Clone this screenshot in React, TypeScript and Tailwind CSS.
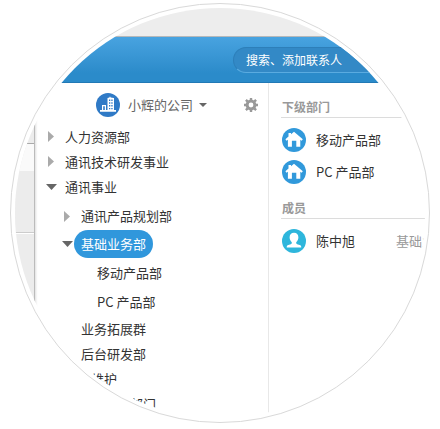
import { useState } from "react";
import type { ReactNode } from "react";

type Department = {
  name: string;
  expandable?: boolean;
  children?: Department[];
};

const departments: Department[] = [
  { name: "人力资源部", expandable: true },
  { name: "通讯技术研发事业", expandable: true },
  {
    name: "通讯事业",
    children: [
      { name: "通讯产品规划部", expandable: true },
      {
        name: "基础业务部",
        children: [{ name: "移动产品部" }, { name: "PC 产品部" }],
      },
      { name: "业务拓展群" },
      { name: "后台研发部" },
    ],
  },
  { name: "运营维护" },
  { name: "通讯支持类部门" },
];

const subDepartments = ["移动产品部", "PC 产品部"];

const indents = ["pl-2", "pl-6", "pl-10"];

function CompanyIcon() {
  return (
    <svg viewBox="0 0 24 24" className="size-6 shrink-0" aria-hidden="true">
      <circle cx="12" cy="12" r="12" fill="#2f7ac6" />
      <path
        fill="#fff"
        fillRule="evenodd"
        d="M4 17h2v-5h4v5h1.500V5l2-.5V3.800h1v.7l3.500.6V17h2v1.700H4zM7.200 13.200V17h1.600v-3.800zM13 6.500v1.500h1.300V6.500zm2.300 0v1.500h1.300V6.500zM13 9.300v1.500h1.300V9.300zm2.300 0v1.500h1.300V9.300zM13 12.100v1.500h1.300v-1.500zm2.300 0v1.500h1.300v-1.500zM13 14.900v1.400h1.300v-1.400zm2.300 0v1.400h1.300v-1.400z"
      />
    </svg>
  );
}

function HouseIcon() {
  return (
    <svg viewBox="0 0 24 24" className="size-6 shrink-0" aria-hidden="true">
      <circle cx="12" cy="12" r="12" fill="#3199db" />
      <path
        fill="#fff"
        d="M12 3.800L20.800 11.200 19.700 12.700 18.300 11.700V18.800H14.300V12.800H9.900V18.800H5.900V11.700L4.500 12.700 3.400 11.200 6.500 8.500V5H9V6.300z"
      />
    </svg>
  );
}

function PersonIcon() {
  return (
    <svg viewBox="0 0 24 24" className="size-6 shrink-0" aria-hidden="true">
      <circle cx="12" cy="12" r="12" fill="#2eb6dc" />
      <path
        fill="#fff"
        d="M12 3.800c2.800 0 4.400 1.900 4.400 4.500 0 2-.9 3.900-2.200 4.900v.9c0 .6.4.9 1 1.100l2.400.8c1.200.4 1.700 1.100 1.700 2.400H4.700c0-1.300.5-2 1.700-2.400l2.400-.8c.6-.2 1-.5 1-1.100v-.9c-1.300-1-2.200-2.900-2.200-4.900 0-2.600 1.600-4.500 4.400-4.500z"
      />
    </svg>
  );
}

function GearIcon() {
  return (
    <svg viewBox="0 0 14 14" className="size-3.5" fill="none" stroke="#999" aria-hidden="true">
      <circle cx="7" cy="7" r="3.900" strokeWidth="3" />
      <path
        strokeWidth="2.400"
        d="M7 0v2.600M7 11.400V14M0 7h2.600M11.400 7H14M1.900 1.900l1.800 1.800M10.300 10.300l1.800 1.800M1.900 12.100l1.800-1.800M10.300 3.700l1.800-1.800"
      />
    </svg>
  );
}

function Arrow({ open }: { open: boolean }) {
  return open ? (
    <svg viewBox="0 0 11 6" className="h-1.5 w-[11px]" aria-hidden="true">
      <path d="M0 0h11L5.500 6z" fill="#666" />
    </svg>
  ) : (
    <svg viewBox="0 0 6 11" className="h-[11px] w-1.5" aria-hidden="true">
      <path d="M0 0v11l6-5.500z" fill="#aaa" />
    </svg>
  );
}

function TreeItem({
  item,
  level,
  selected,
  onSelect,
}: {
  item: Department;
  level: number;
  selected: string;
  onSelect: (name: string) => void;
}) {
  const [open, setOpen] = useState(Boolean(item.children));
  const hasArrow = item.expandable || item.children;
  const height = level === 2 ? "h-[29px]" : level === 1 && hasArrow ? "h-7" : "h-[25px]";

  return (
    <li>
      <div className={`flex items-center ${height} ${indents[level]}`}>
        <button
          type="button"
          aria-label={`展开${item.name}`}
          aria-expanded={open}
          disabled={!hasArrow}
          onClick={() => setOpen(!open)}
          className="flex w-3.5 shrink-0 items-center justify-center"
        >
          {hasArrow && <Arrow open={open} />}
        </button>
        <button
          type="button"
          onClick={() => onSelect(item.name)}
          className={`whitespace-nowrap px-[7px] ${
            selected === item.name && level === 1
              ? "h-7 rounded-full bg-[#3097dc] text-white"
              : ""
          }`}
        >
          {item.name}
        </button>
      </div>
      {open && item.children && (
        <ul className={level === 0 ? "pt-[3px]" : ""}>
          {item.children.map((child) => (
            <TreeItem
              key={child.name}
              item={child}
              level={level + 1}
              selected={selected}
              onSelect={onSelect}
            />
          ))}
        </ul>
      )}
    </li>
  );
}

function Section({ title, children }: { title: string; children: ReactNode }) {
  return (
    <section className="pt-3.5">
      <h2 className="border-b border-[#dcdcdc] pl-px text-xs/5 font-bold text-[#999]">{title}</h2>
      <ul className="space-y-2 pt-2.5 pl-px">{children}</ul>
    </section>
  );
}

export default function App() {
  const [selected, setSelected] = useState("基础业务部");

  return (
    <div className="bg-white px-2.5 pt-[3px] font-['Noto_Sans_CJK_SC',sans-serif] text-[13px]/5 text-[#333]">
      <main className="mx-auto aspect-square w-full max-w-[420px] rounded-full border border-[#d9d9d9] p-1">
        <div className="flex h-full flex-col overflow-hidden rounded-full">
          <div className="h-[29px] shrink-0 border-b border-[#b5b8ba] bg-[#ededed]" />

          <header className="flex h-[46px] shrink-0 items-center justify-end border-b border-[#2279b5] bg-linear-to-b from-[#48a3e0] to-[#2b8bca] to-80%">
            <input
              type="search"
              aria-label="搜索、添加联系人"
              placeholder="搜索、添加联系人"
              className="h-[26px] w-48 rounded-full border border-[#2d7fb9] border-b-[#5aabe0] bg-[#3389c6] px-3 text-xs text-white placeholder:text-white"
            />
          </header>

          <div className="flex min-h-0 flex-1">
            {/* Window behind the contacts panel */}
            <div className="flex w-[20px] shrink-0 flex-col border-r border-[#bbb] bg-[#ececec] shadow-[1px_0_2px_#ddd]">
              <div className="h-[61px] shrink-0 border-b border-[#aaa]" />
              <div className="h-[27px] shrink-0 bg-[#fafafa]" />
              <div className="h-[62px] shrink-0 border-b border-[#ccc]" />
              <div className="h-px shrink-0 bg-white" />
            </div>

            <nav className="min-w-0 flex-1 border-r border-[#e8e8e8] pl-px">
              <div className="flex items-center pt-2.5 pr-2.5 pb-[7px] pl-[60px]">
                <CompanyIcon />
                <button type="button" className="ml-2 flex items-center gap-1.5 text-[#666]">
                  小辉的公司
                  <svg viewBox="0 0 8 4" className="h-1 w-2" aria-hidden="true">
                    <path d="M0 0h8L4 4z" fill="#666" />
                  </svg>
                </button>
                <button type="button" aria-label="设置" className="ml-auto">
                  <GearIcon />
                </button>
              </div>
              <ul>
                {departments.map((item) => (
                  <TreeItem
                    key={item.name}
                    item={item}
                    level={0}
                    selected={selected}
                    onSelect={setSelected}
                  />
                ))}
              </ul>
            </nav>

            <aside className="w-[156px] shrink-0 pl-3">
              <Section title="下级部门">
                {subDepartments.map((name) => (
                  <li key={name} className="flex items-center gap-2.5">
                    <HouseIcon />
                    {name}
                  </li>
                ))}
              </Section>
              <Section title="成员">
                <li className="flex items-center gap-2.5 whitespace-nowrap">
                  <PersonIcon />
                  <span className="w-[70px] shrink-0">陈中旭</span>
                  <span className="text-[#999]">基础业务部</span>
                </li>
              </Section>
            </aside>
          </div>
        </div>
      </main>
    </div>
  );
}
